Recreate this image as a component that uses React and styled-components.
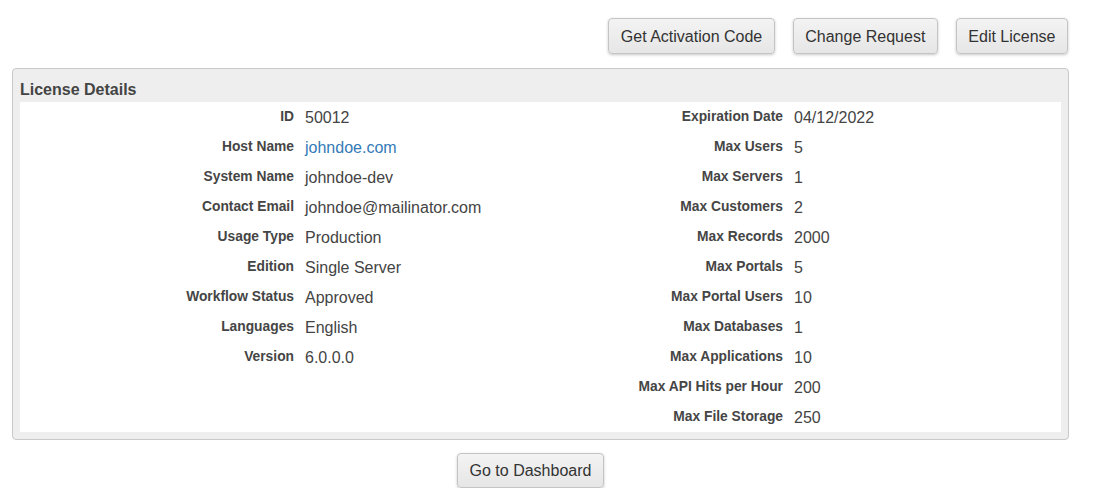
import React from "react";
import styled, { createGlobalStyle } from "styled-components";

const Global = createGlobalStyle`
  html, body { margin: 0; padding: 0; background: #fff; }
  body { font-family: "Liberation Sans", Arial, sans-serif; color: #333; }
`;

const Page = styled.div`
  padding: 18px 24px 0 12px;
  width: 1057px;
`;

const Toolbar = styled.div`
  display: flex;
  justify-content: flex-end;
  gap: 18px;
  padding-right: 1px;
  margin-bottom: 14px;
`;

const Button = styled.button`
  font-family: "Liberation Sans", Arial, sans-serif;
  font-size: 16px;
  color: #333;
  height: ${(p) => (p.$short ? 35 : 36)}px;
  padding: 1px 11.5px 0;
  border: 1px solid #c4c4c4;
  border-radius: 4px;
  background: linear-gradient(#f3f3f3, #e6e6e6);
  box-shadow: 0 1px 3px rgba(0, 0, 0, 0.22);
  cursor: pointer;
`;

const Panel = styled.section`
  border: 1px solid #c9c9c9;
  border-radius: 4px;
  background: #eeeeee;
  padding: 0 7px 7px 7px;
`;

const PanelTitle = styled.h2`
  margin: 0;
  height: 33px;
  display: flex;
  align-items: flex-end;
  padding-bottom: 3px;
  box-sizing: border-box;
  font-size: 16px;
  font-weight: bold;
  color: #444;
`;

const Body = styled.div`
  background: #fff;
  display: grid;
  grid-template-columns: 279px 241px 248px 1fr;
  grid-auto-rows: 30px;
`;

const Label = styled.div`
  text-align: right;
  padding: 7px 5px 0 0;
  font-size: 13.8px;
  font-weight: bold;
  color: #454545;
  white-space: nowrap;
  grid-column: ${(p) => p.$col};
`;

const Value = styled.div`
  padding: 7px 0 0 6px;
  font-size: 16px;
  color: ${(p) => (p.$link ? "#337ab7" : "#444")};
  white-space: nowrap;
  grid-column: ${(p) => p.$col};
`;

const Footer = styled.div`
  display: flex;
  justify-content: center;
  padding-right: 20px;
  margin-top: 13px;
`;

const left = [
  ["ID", "50012"],
  ["Host Name", "johndoe.com", true],
  ["System Name", "johndoe-dev"],
  ["Contact Email", "johndoe@mailinator.com"],
  ["Usage Type", "Production"],
  ["Edition", "Single Server"],
  ["Workflow Status", "Approved"],
  ["Languages", "English"],
  ["Version", "6.0.0.0"],
];

const right = [
  ["Expiration Date", "04/12/2022"],
  ["Max Users", "5"],
  ["Max Servers", "1"],
  ["Max Customers", "2"],
  ["Max Records", "2000"],
  ["Max Portals", "5"],
  ["Max Portal Users", "10"],
  ["Max Databases", "1"],
  ["Max Applications", "10"],
  ["Max API Hits per Hour", "200"],
  ["Max File Storage", "250"],
];

export default function App() {
  const rows = [];
  for (let i = 0; i < right.length; i++) {
    const l = left[i];
    const r = right[i];
    rows.push(
      <React.Fragment key={i}>
        <Label $col={1}>{l ? l[0] : ""}</Label>
        <Value $col={2} $link={l && l[2]}>{l ? l[1] : ""}</Value>
        <Label $col={3}>{r[0]}</Label>
        <Value $col={4}>{r[1]}</Value>
      </React.Fragment>
    );
  }
  return (
    <>
      <Global />
      <Page>
        <Toolbar>
          <Button>Get Activation Code</Button>
          <Button>Change Request</Button>
          <Button>Edit License</Button>
        </Toolbar>
        <Panel>
          <PanelTitle>License Details</PanelTitle>
          <Body>{rows}</Body>
        </Panel>
        <Footer>
          <Button $short>Go to Dashboard</Button>
        </Footer>
      </Page>
    </>
  );
}
